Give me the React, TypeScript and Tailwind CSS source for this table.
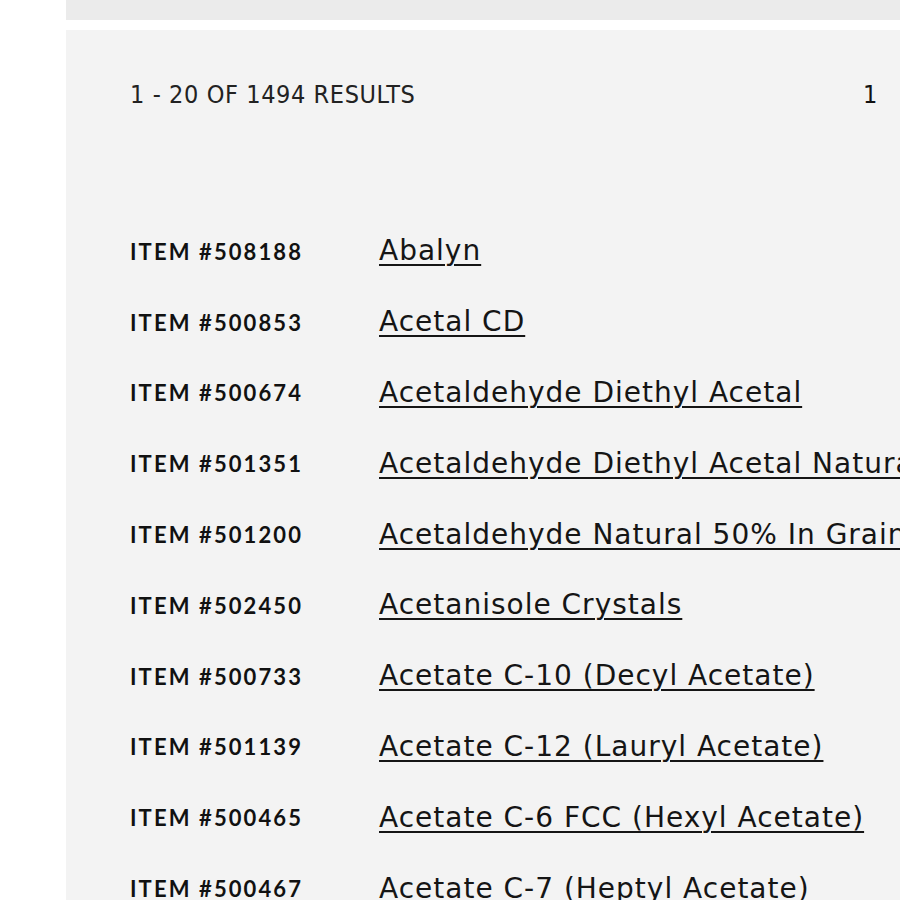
const rows = [
  ["508188", "Abalyn"],
  ["500853", "Acetal CD"],
  ["500674", "Acetaldehyde Diethyl Acetal"],
  ["501351", "Acetaldehyde Diethyl Acetal Natural"],
  ["501200", "Acetaldehyde Natural 50% In Grain Alcohol"],
  ["502450", "Acetanisole Crystals"],
  ["500733", "Acetate C-10 (Decyl Acetate)"],
  ["501139", "Acetate C-12 (Lauryl Acetate)"],
  ["500465", "Acetate C-6 FCC (Hexyl Acetate)"],
  ["500467", "Acetate C-7 (Heptyl Acetate)"],
  ["500468", "Acetate C-8 (Octyl Acetate)"],
];

export default function App() {
  return (
    <div className="h-[900px] overflow-hidden bg-white pl-[66px] text-[#111]">
      <div className="h-[20px] w-[1200px] bg-[#ebebeb]" />
      <div className="mt-[10px] w-[1200px] bg-[#f3f3f3] pl-[64px] pt-[51px] pb-10">
        <div className="flex items-center font-['DejaVu_Sans_Condensed',sans-serif]">
          <div className="w-[733px] text-[25px] font-light leading-[28px] tracking-[0.6px] text-[#222]">
            1 - 20 OF 1494 RESULTS
          </div>
          <div className="flex gap-[26px] text-[25px] leading-[28px]">
            <span>1</span>
            <span className="text-[#888]">2</span>
          </div>
        </div>
        <div className="mt-[107px]">
          {rows.map(([id, name]) => (
            <div key={id} className="flex h-[70.8px] items-center">
              <div className="w-[249px] font-['Lato',sans-serif] text-[22px] font-bold tracking-[2.1px]">
                ITEM #{id}
              </div>
              <a
                href="#"
                className="font-['DejaVu_Sans',sans-serif] text-[28px] tracking-[1px] text-[#151515] underline decoration-[1.5px] underline-offset-[4px]"
              >
                {name}
              </a>
            </div>
          ))}
        </div>
      </div>
    </div>
  );
}
